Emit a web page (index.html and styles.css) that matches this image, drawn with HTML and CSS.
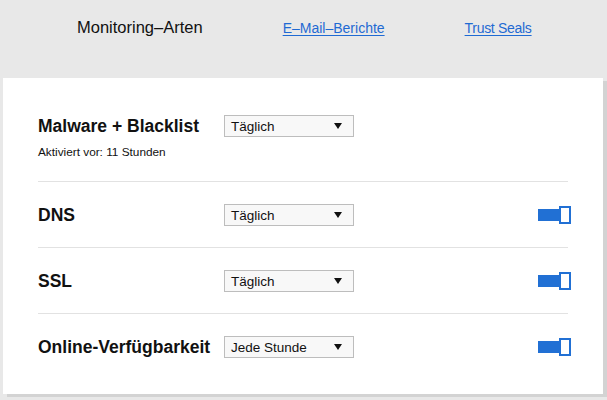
FILE: index.html
```html
<!DOCTYPE html>
<html lang="de">
<head>
<meta charset="utf-8">
<link rel="stylesheet" href="styles.css">
</head>
<body>
<nav class="tabs">
  <span class="tab active">Monitoring–Arten</span>
  <a class="tab" href="#">E–Mail–Berichte</a>
  <a class="tab narrow" href="#">Trust Seals</a>
</nav>
<main class="card">
  <section class="row first">
    <div class="head">
      <h2 class="title">Malware + Blacklist</h2>
      <div class="select"><span>Täglich</span><i class="arrow"></i></div>
    </div>
    <p class="sub">Aktiviert vor: 11 Stunden</p>
  </section>
  <section class="row">
    <div class="head">
      <h2 class="title">DNS</h2>
      <div class="select"><span>Täglich</span><i class="arrow"></i></div>
      <div class="toggle"><span class="bar"></span><span class="knob"></span></div>
    </div>
  </section>
  <section class="row">
    <div class="head">
      <h2 class="title">SSL</h2>
      <div class="select"><span>Täglich</span><i class="arrow"></i></div>
      <div class="toggle"><span class="bar"></span><span class="knob"></span></div>
    </div>
  </section>
  <section class="row last">
    <div class="head">
      <h2 class="title">Online-Verfügbarkeit</h2>
      <div class="select"><span>Jede Stunde</span><i class="arrow"></i></div>
      <div class="toggle"><span class="bar"></span><span class="knob"></span></div>
    </div>
  </section>
</main>
</body>
</html>
```
FILE: styles.css
```css
html, body {
  margin: 0;
  padding: 0;
}
body {
  background: #e8e8e8;
  font-family: "Liberation Sans", Arial, sans-serif;
  color: #111;
  height: 400px;
  overflow: hidden;
}
.tabs {
  display: flex;
  gap: 80px;
  padding: 18px 0 0 77px;
  height: 60px;
  box-sizing: border-box;
  align-items: baseline;
}
.tab {
  font-size: 14px;
  line-height: 18px;
  color: #1f6ad3;
  text-decoration: underline;
  text-underline-offset: 2px;
}
.tab.narrow {
  letter-spacing: -0.3px;
}
.tab.active {
  font-size: 16.5px;
  color: #111;
  text-decoration: none;
}
.card {
  display: block;
  margin: 18px 4px 0 3px;
  background: #fff;
  box-shadow: 4px 3px 0 #d3d3d3;
  padding: 0 35px 15px;
  height: 316px;
  box-sizing: border-box;
}
.row {
  padding: 22px 0 21px;
  border-bottom: 1px solid #e2e2e2;
}
.row.first {
  padding: 37px 0 22px;
}
.row.last {
  border-bottom: none;
}
.head {
  display: flex;
  align-items: center;
  height: 22px;
}
.title {
  margin: 0;
  width: 186px;
  flex: none;
  font-size: 17.5px;
  font-weight: bold;
  line-height: 22px;
  color: #111;
}
.select {
  width: 130px;
  height: 22px;
  box-sizing: border-box;
  border: 1px solid #bdbdbd;
  background: #f8f8f8;
  display: flex;
  align-items: center;
  justify-content: space-between;
  padding: 0 11px 0 6px;
  font-size: 13.5px;
  color: #111;
}
.arrow {
  width: 0;
  height: 0;
  border-left: 4.5px solid transparent;
  border-right: 4.5px solid transparent;
  border-top: 6px solid #111;
}
.sub {
  margin: 8px 0 0;
  font-size: 11.8px;
  line-height: 14px;
  color: #111;
}
.toggle {
  margin-left: auto;
  margin-right: -3px;
  display: flex;
  align-items: center;
}
.bar {
  width: 21px;
  height: 12px;
  background: #2170d4;
}
.knob {
  width: 12px;
  height: 18px;
  box-sizing: border-box;
  border: 2px solid #2170d4;
  background: #fff;
}
```
